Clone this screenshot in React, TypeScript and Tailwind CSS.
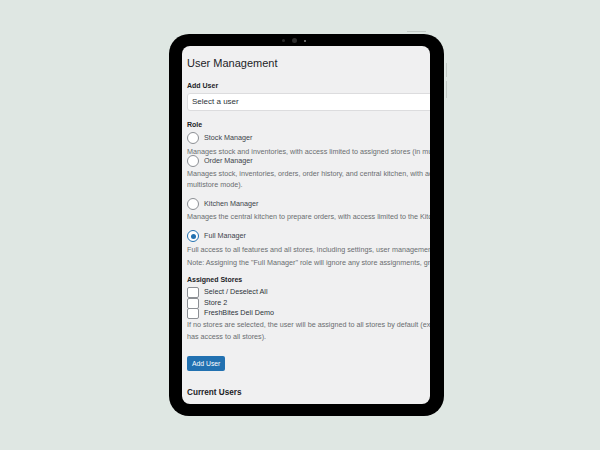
const FONT = { fontFamily: '"Liberation Sans", Arial, sans-serif' };

function Radio({ checked, label }: { checked?: boolean; label: string }) {
  return (
    <div className="flex h-[12px] items-center gap-[5px]">
      <span
        className={`grid h-[12px] w-[12px] shrink-0 place-items-center rounded-full border bg-white ${
          checked ? "border-[#2271b1]" : "border-[#8c8f94]"
        }`}
      >
        {checked && <span className="h-[5px] w-[5px] rounded-full bg-[#2271b1]" />}
      </span>
      <span className="text-[7.2px] text-[#3c434a]">{label}</span>
    </div>
  );
}

function Check({ label }: { label: string }) {
  return (
    <div className="flex h-[10.7px] items-center gap-[5px]">
      <span className="h-[11px] w-[12px] shrink-0 rounded-[2px] border border-[#8c8f94] bg-white" />
      <span className="text-[7.2px] text-[#2c3338]">{label}</span>
    </div>
  );
}

const Desc = ({ children, className = "" }: { children: React.ReactNode; className?: string }) => (
  <p className={`whitespace-nowrap text-[7.2px] leading-[11px] text-[#6a6d70] ${className}`}>{children}</p>
);

const Label = ({ children, className = "" }: { children: React.ReactNode; className?: string }) => (
  <div className={`h-[10px] text-[7px] font-bold leading-[10px] text-[#1d2327] ${className}`}>{children}</div>
);

export default function App() {
  return (
    <div className="flex h-[450px] w-[600px] items-center bg-[#dfe7e3] pl-[169px]" style={FONT}>
      <div className="relative h-[382px] w-[275px] rounded-[20px] bg-black pb-[12px] pl-[13px] pr-[14px] pt-[12px]">
        {/* camera */}
        <div className="absolute left-[113px] top-[4px] flex items-center gap-[7px]">
          <span className="h-[3px] w-[3px] rounded-full bg-[#2b2b2b]" />
          <span className="h-[5px] w-[5px] rounded-full bg-[#2e2e2e]" />
          <span className="h-[2px] w-[2px] rounded-full bg-[#8a8a8a]" />
        </div>
        {/* hardware buttons */}
        <span className="absolute left-[238px] top-[-3px] h-[1px] w-[19px] bg-[#c3cac6]" />
        <span className="absolute right-[-3px] top-[29px] h-[14px] w-[1px] bg-[#c3cac6]" />
        <span className="absolute right-[-3px] top-[47px] h-[17px] w-[1px] bg-[#c3cac6]" />

        <div className="h-full w-full overflow-hidden rounded-[8px] bg-[#f0f0f1]">
          <div className="flex w-[420px] flex-col pl-[5px]">
            <h1 className="mt-[10px] h-[14px] text-[11px] leading-[14px] text-[#1d2327]">User Management</h1>

            <Label className="mt-[11px]">Add User</Label>
            <div className="mt-[2px] flex h-[18px] items-center rounded-l-[3px] border border-[#dcdcde] bg-white pl-[4px] text-[8px] text-[#2c3338]">
              Select a user
            </div>

            <Label className="mt-[9px]">Role</Label>
            <div className="mt-[2px]">
              <Radio label="Stock Manager" />
            </div>
            <Desc className="mt-[2px]">
              Manages stock and inventories, with access limited to assigned stores (in multistore mode).
            </Desc>
            <div className="-mt-[2px]">
              <Radio label="Order Manager" />
            </div>
            <Desc className="mt-[1px]">
              Manages stock, inventories, orders, order history, and central kitchen, with access limited to assigned stores (in
              <br />
              multistore mode).
            </Desc>
            <div className="mt-[8px]">
              <Radio label="Kitchen Manager" />
            </div>
            <Desc className="mt-[1px]">
              Manages the central kitchen to prepare orders, with access limited to the Kitchen store.
            </Desc>
            <div className="mt-[8px]">
              <Radio checked label="Full Manager" />
            </div>
            <Desc className="mt-[2px]">
              Full access to all features and all stores, including settings, user management and reports.
            </Desc>
            <Desc className="mt-[2px]">
              Note: Assigning the "Full Manager" role will ignore any store assignments, granting access to all stores.
            </Desc>

            <Label className="mt-[7px]">Assigned Stores</Label>
            <div className="mt-[2px] flex flex-col">
              <Check label="Select / Deselect All" />
              <Check label="Store 2" />
              <Check label="FreshBites Deli Demo" />
            </div>
            <Desc className="mt-[0px] leading-[12px]">
              If no stores are selected, the user will be assigned to all stores by default (except Full Manager, who
              <br />
              has access to all stores).
            </Desc>

            <div className="mt-[13px] flex">
              <button className="h-[15px] rounded-[2px] bg-[#2271b1] px-[5px] text-[6.8px] leading-[15px] text-white">
                Add User
              </button>
            </div>

            <h2 className="mt-[16px] h-[12px] text-[8.2px] font-bold leading-[12px] text-[#1d2327]">Current Users</h2>
          </div>
        </div>
      </div>
    </div>
  );
}
